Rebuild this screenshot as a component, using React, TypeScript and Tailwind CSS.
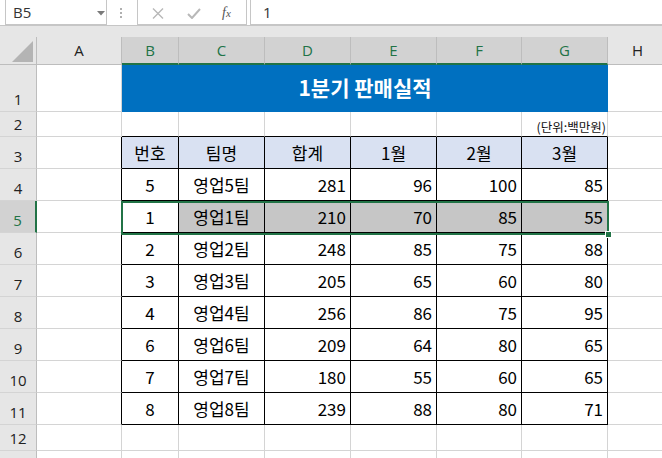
import React from "react";

const cols = [
  { key: "A", w: 85 },
  { key: "B", w: 57 },
  { key: "C", w: 86 },
  { key: "D", w: 86 },
  { key: "E", w: 86 },
  { key: "F", w: 85 },
  { key: "G", w: 86 },
  { key: "H", w: 60 },
];

const data: (string | number)[][] = [
  [5, "영업5팀", 281, 96, 100, 85],
  [1, "영업1팀", 210, 70, 85, 55],
  [2, "영업2팀", 248, 85, 75, 88],
  [3, "영업3팀", 205, 65, 60, 80],
  [4, "영업4팀", 256, 86, 75, 95],
  [6, "영업6팀", 209, 64, 80, 65],
  [7, "영업7팀", 180, 55, 60, 65],
  [8, "영업8팀", 239, 88, 80, 71],
];

const F = { fontFamily: '"Noto Sans CJK KR", "Noto Sans", sans-serif' };
const HF = { fontFamily: '"Open Sans", "Noto Sans", sans-serif' };

function RowHeader({ n, h, sel }: { n?: number; h: number; sel?: boolean }) {
  return (
    <div
      className={
        "w-[37px] shrink-0 flex items-end justify-center pb-[1px] text-[15px] border-b border-b-[#d4d4d4] " +
        (sel
          ? "bg-[#d2d2d2] text-[#217346] border-r-2 border-r-[#217346]"
          : "bg-[#e6e6e6] text-[#222] border-r border-r-[#bdbdbd]")
      }
      style={{ height: h, ...HF }}
    >
      {n}
    </div>
  );
}

function Cell({
  w,
  h,
  className = "",
  children,
}: {
  w: number;
  h: number;
  className?: string;
  children?: React.ReactNode;
}) {
  return (
    <div className={"shrink-0 flex " + className} style={{ width: w, height: h }}>
      {children}
    </div>
  );
}

export default function App() {
  const grid = "border-r border-b border-r-[#d4d4d4] border-b-[#d4d4d4]";
  const black = "border-r border-b border-r-black border-b-black";
  const rowH = 32;

  return (
    <div className="w-[662px] h-[458px] overflow-hidden bg-white relative" style={F}>
      {/* Formula bar */}
      <div className="h-[26px] bg-white border-b border-b-[#c6c6c6] flex items-stretch relative">
        <div className="absolute left-[5px] top-[-1px] w-[102px] h-[26px] border border-[#c6c6c6] bg-white flex items-center">
          <span className="ml-[7px] text-[15px] text-[#333]" style={HF}>
            B5
          </span>
          <svg className="absolute left-[91px] top-[11px]" width="8" height="5" viewBox="0 0 8 5">
            <path d="M0 0 L8 0 L4 4.5 Z" fill="#7a7a7a" />
          </svg>
        </div>
        <div className="absolute left-[120px] top-[8px] flex flex-col gap-[2px]">
          <div className="w-[2px] h-[2px] bg-[#b0b0b0]" />
          <div className="w-[2px] h-[2px] bg-[#b0b0b0]" />
          <div className="w-[2px] h-[2px] bg-[#b0b0b0]" />
        </div>
        <div className="absolute left-[137px] top-[-1px] w-[110px] h-[26px] border border-[#c6c6c6] bg-white">
          <svg className="absolute left-[14px] top-[8px]" width="12" height="11" viewBox="0 0 12 11">
            <path d="M1 0.5 L11 10.5 M11 0.5 L1 10.5" stroke="#b8b8b8" strokeWidth="1.4" />
          </svg>
          <svg className="absolute left-[49px] top-[8px]" width="14" height="11" viewBox="0 0 14 11">
            <path d="M1 6 L5 10 L13 1" stroke="#b8b8b8" strokeWidth="2" fill="none" />
          </svg>
          <span
            className="absolute left-[84px] top-[2px] text-[14px] italic text-[#555]"
            style={{ fontFamily: '"Liberation Serif", serif' }}
          >
            f<span className="text-[11px]">x</span>
          </span>
        </div>
        <div className="absolute left-[250px] top-[-1px] right-[-2px] h-[26px] border border-[#c6c6c6] bg-white flex items-center">
          <span className="ml-[12px] text-[15px] text-[#333]" style={HF}>
            1
          </span>
        </div>
      </div>
      <div className="h-[11px] bg-[#e6e6e6]" />

      {/* Column headers */}
      <div className="flex h-[28px]">
        <div className="w-[37px] shrink-0 bg-[#e6e6e6] border-r border-r-[#bdbdbd] border-b border-b-[#bdbdbd] relative">
          <svg className="absolute left-[12px] top-[4px]" width="21" height="21" viewBox="0 0 21 21">
            <path d="M21 0 L21 21 L0 21 Z" fill="#b4b4b4" />
          </svg>
        </div>
        {cols.map((c) => {
          const sel = c.key >= "B" && c.key <= "G";
          return (
            <div
              key={c.key}
              className={
                "shrink-0 flex items-center justify-center text-[15px] border-r border-r-[#bdbdbd] " +
                (sel
                  ? "bg-[#d2d2d2] text-[#217346] border-b-2 border-b-[#217346]"
                  : "bg-[#e6e6e6] text-[#222] border-b border-b-[#bdbdbd]")
              }
              style={{ width: c.w, ...HF }}
            >
              {c.key}
            </div>
          );
        })}
      </div>

      {/* Row 1 */}
      <div className="flex">
        <RowHeader n={1} h={47} />
        <Cell w={85} h={47} className={grid} />
        <Cell w={486} h={47} className="bg-[#0070c0] items-center justify-center border-b border-b-[#0070c0]">
          <span className="text-white font-bold text-[21px]">1분기 판매실적</span>
        </Cell>
        <Cell w={60} h={47} className={grid} />
      </div>

      {/* Row 2 */}
      <div className="flex">
        <RowHeader n={2} h={25} />
        {cols.map((c) => {
          const inTable = c.key >= "B" && c.key <= "G";
          return (
            <Cell
              key={c.key}
              w={c.w}
              h={25}
              className={
                (inTable
                  ? "border-r border-r-[#d4d4d4] border-b border-b-black"
                  : grid) + " items-end justify-end pr-[1px]"
              }
            >
              {c.key === "G" && (
                <span className="text-[12.5px] leading-[18px] text-[#111]">(단위:백만원)</span>
              )}
            </Cell>
          );
        })}
      </div>

      {/* Row 3 header */}
      <div className="flex">
        <RowHeader n={3} h={rowH} />
        <Cell w={85} h={rowH} className="border-r border-r-black border-b border-b-[#d4d4d4]" />
        {["번호", "팀명", "합계", "1월", "2월", "3월"].map((t, i) => (
          <Cell
            key={t}
            w={cols[i + 1].w}
            h={rowH}
            className={black + " bg-[#d9e1f2] items-center justify-center text-[17px] text-black"}
          >
            {t}
          </Cell>
        ))}
        <Cell w={60} h={rowH} className={grid} />
      </div>

      {/* Data rows */}
      {data.map((r, ri) => {
        const sel = ri === 1;
        return (
          <div className="flex" key={ri}>
            <RowHeader n={ri + 4} h={rowH} sel={sel} />
            <Cell w={85} h={rowH} className="border-r border-r-black border-b border-b-[#d4d4d4]" />
            {r.map((v, ci) => {
              const align = ci < 2 ? "justify-center" : "justify-end pr-[4px]";
              const bg = sel && ci > 0 ? "bg-[#c6c6c6]" : "bg-white";
              return (
                <Cell
                  key={ci}
                  w={cols[ci + 1].w}
                  h={rowH}
                  className={black + " " + bg + " " + align + " items-center text-[17px] text-black"}
                >
                  {v}
                </Cell>
              );
            })}
            <Cell w={60} h={rowH} className={grid} />
          </div>
        );
      })}

      {/* Row 12, 13 */}
      {[12, 13].map((n) => (
        <div className="flex" key={n}>
          <RowHeader n={n === 12 ? 12 : undefined} h={26} />
          {cols.map((c) => (
            <Cell key={c.key} w={c.w} h={26} className={grid} />
          ))}
        </div>
      ))}

      {/* Selection overlay B5:G5 */}
      <div className="absolute left-[121px] top-[201px] w-[488px] h-[34px] border-2 border-[#217346] pointer-events-none" />
      <div className="absolute left-[605px] top-[231px] w-[7px] h-[7px] bg-[#217346] border border-white" />
    </div>
  );
}
